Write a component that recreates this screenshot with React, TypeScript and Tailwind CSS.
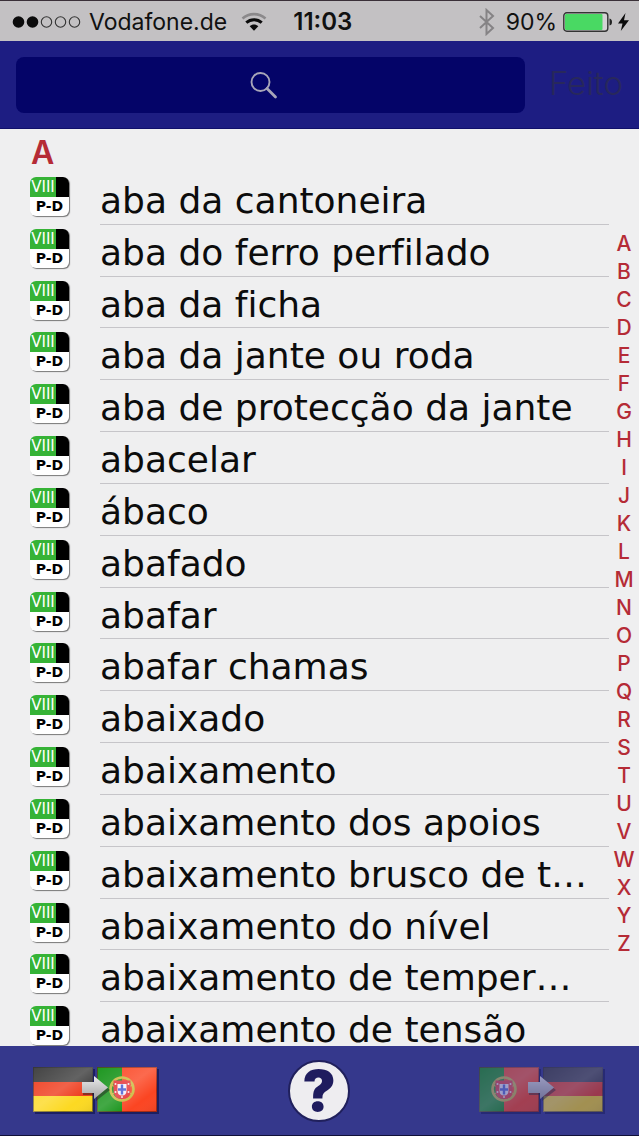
import { useId } from "react";

const entries = [
  "aba da cantoneira",
  "aba do ferro perfilado",
  "aba da ficha",
  "aba da jante ou roda",
  "aba de protecção da jante",
  "abacelar",
  "ábaco",
  "abafado",
  "abafar",
  "abafar chamas",
  "abaixado",
  "abaixamento",
  "abaixamento dos apoios",
  "abaixamento brusco de tensão",
  "abaixamento do nível",
  "abaixamento de temperatura",
  "abaixamento de tensão",
];

const letters = "ABCDEFGHIJKLMNOPQRSTUVWXYZ".split("");

function StatusBar() {
  return (
    <div className="flex h-[41px] shrink-0 items-center border-t border-[#3a3038] bg-[#c3c1c3] pt-[2px] pr-[9px] pl-[12px] text-[23px] leading-[30px] text-[#111]">
      <svg width="69" height="14" viewBox="0 0 69 14" aria-hidden="true">
        <circle cx="6.500" cy="7" r="5.800" fill="#0b0b0b" />
        <circle cx="20.500" cy="7" r="5.800" fill="#0b0b0b" />
        <g fill="none" stroke="#333" strokeWidth="1.100">
          <circle cx="34.500" cy="7" r="5.200" />
          <circle cx="48.500" cy="7" r="5.200" />
          <circle cx="62.500" cy="7" r="5.200" />
        </g>
      </svg>
      <span className="ml-[8px]">Vodafone.de</span>
      <svg className="ml-[14px]" width="26" height="20" viewBox="0 0 26 20" fill="none" aria-hidden="true">
        <path d="M1.500 6.500C8 .7 18 .7 24.500 6.500" stroke="#8b898b" strokeWidth="2.600" />
        <path d="M5.300 10.700c4.300-4 11.100-4 15.400 0" stroke="#0b0b0b" strokeWidth="3" />
        <path d="M8.700 14.200c2.500-2.300 6.100-2.300 8.600 0L13 18.800z" fill="#0b0b0b" />
      </svg>
      <span className="ml-[26px] text-[24px] font-semibold">11:03</span>
      <svg className="ml-auto" width="18" height="28" viewBox="0 0 18 28" fill="none" stroke="#858385" strokeWidth="2" aria-hidden="true">
        <path d="M2 8l13 12-6.500 6V2L15 8 2 20" />
      </svg>
      <span className="ml-[10px]">90%</span>
      <svg className="ml-[6px]" width="49" height="20" viewBox="0 0 49 20" aria-hidden="true">
        <rect x=".8" y=".8" width="44" height="18.400" rx="3" fill="#d4d2d4" stroke="#333" strokeWidth="1.400" />
        <rect x="2" y="2" width="37.500" height="16" rx="1" fill="#49d963" />
        <path d="M46.500 6.500q2.500.5 2.500 3.500t-2.500 3.500z" fill="#222" />
      </svg>
      <svg className="ml-[5px]" width="13" height="20" viewBox="0 0 13 20" aria-hidden="true">
        <path d="M8.500 1L1 11.500h4.500L3.800 19 12 8.200H7z" fill="#0b0b0b" />
      </svg>
    </div>
  );
}

function SearchBar() {
  return (
    <header className="flex h-[88px] shrink-0 items-center border-b border-[#10106a] bg-[#1d1d82] pr-[16px] pl-[16px]">
      <label className="relative flex h-[56px] flex-1">
        <input type="search" aria-label="Buscar" className="w-full rounded-lg bg-[#040468] px-4 text-2xl text-white outline-none" />
        <svg className="pointer-events-none absolute top-[14px] left-[233px]" width="29" height="29" viewBox="0 0 29 29" fill="none" stroke="#a8a6b8" aria-hidden="true">
          <circle cx="11.500" cy="11" r="9" strokeWidth="1.900" />
          <path d="M18 17.500l8.500 8.500" strokeWidth="2.800" strokeLinecap="round" />
        </svg>
      </label>
      <button type="button" className="ml-[24px] pb-[4px] text-[33px] leading-[40px] font-light text-[#28285c]">
        Feito
      </button>
    </header>
  );
}

function VolumeBadge() {
  return (
    <span className="mt-[4px] flex h-[39px] w-[39px] shrink-0 flex-col overflow-hidden rounded-md bg-white font-['DejaVu_Sans',sans-serif] shadow-[1px_1px_1px_#777]">
      <span className="flex h-[20px]">
        <span className="flex w-[26px] items-center justify-center bg-[#36b336] text-[15px] leading-[20px] text-white">VIII</span>
        <span className="flex-1 bg-black" />
      </span>
      <span className="text-center text-[14px] leading-[19px] font-bold text-black">P-D</span>
    </span>
  );
}

function GermanFlag({ x, y }: { x: number; y: number }) {
  return (
    <g transform={`translate(${x} ${y})`}>
      <rect x="2" y="2" width="60" height="45" fill="#10134a" opacity=".65" />
      <rect width="60" height="15" fill="#3c3c3c" />
      <rect y="15" width="60" height="14" fill="#ee3b1c" />
      <rect y="29" width="60" height="16" fill="#fcd922" />
      <rect x=".5" y=".5" width="59" height="44" fill="none" stroke="#222" strokeOpacity=".55" />
    </g>
  );
}

function PortugueseFlag({ x, y }: { x: number; y: number }) {
  return (
    <g transform={`translate(${x} ${y})`}>
      <rect x="2" y="2" width="60" height="45" fill="#10134a" opacity=".65" />
      <rect width="25" height="45" fill="#159318" />
      <rect x="25" width="35" height="45" fill="#fb4522" />
      <rect x=".5" y=".5" width="59" height="44" fill="none" stroke="#601408" strokeOpacity=".55" />
      <circle cx="25" cy="22" r="11.500" fill="none" stroke="#c9b83c" strokeWidth="2.600" />
      <path d="M14 18q11 6 22 0M14 27q11-4 22 0" fill="none" stroke="#c9b83c" strokeWidth="1.200" />
      <path d="M16.500 13.500h17V23q0 9-8.500 9t-8.500-9z" fill="#e33136" />
      <g fill="#f3e6ea">
        <circle cx="18.500" cy="17" r="1" />
        <circle cx="31.500" cy="17" r="1" />
        <circle cx="18.500" cy="25" r="1" />
        <circle cx="31.500" cy="25" r="1" />
        <circle cx="25" cy="30" r="1" />
      </g>
      <path d="M20.500 17h9v6.500q0 5-4.500 5t-4.500-5z" fill="#f3f1fa" />
      <path d="M25 17.500v10M21 22.500h8" stroke="#3f55d0" strokeWidth="2.400" />
    </g>
  );
}

function LanguagePair({ reversed = false }: { reversed?: boolean }) {
  const id = useId();
  return (
    <svg width="128" height="50" viewBox="0 0 128 50" aria-hidden="true">
      <defs>
        <linearGradient id={`${id}s`} x1="0" y1="0" x2="1" y2="1">
          <stop offset="0" stopColor="#fff" stopOpacity=".04" />
          <stop offset=".48" stopColor="#fff" stopOpacity=".2" />
          <stop offset=".75" stopColor="#fff" stopOpacity="0" />
          <stop offset="1" stopColor="#000" stopOpacity=".08" />
        </linearGradient>
        <linearGradient id={`${id}a`} x1="0" y1="0" x2="0" y2="1">
          <stop offset="0" stopColor="#ececec" />
          <stop offset="1" stopColor="#a4a4a4" />
        </linearGradient>
      </defs>
      {reversed ? <PortugueseFlag x={1} y={1} /> : <GermanFlag x={1} y={1} />}
      {reversed ? <GermanFlag x={65} y={1} /> : <PortugueseFlag x={65} y={1} />}
      <rect x="1" y="1" width="60" height="45" fill={`url(#${id}s)`} />
      <rect x="65" y="1" width="60" height="45" fill={`url(#${id}s)`} />
      <path d="M51 19h13v-6l14 11-14 11v-6H51z" fill="#222" opacity=".5" />
      <path d="M50 16h12v-6l14 11.500L62 33v-6H50z" fill={`url(#${id}a)`} />
    </svg>
  );
}

export default function App() {
  return (
    <div className="flex min-h-screen flex-col bg-[#efeff0] font-['Inter','Liberation_Sans',sans-serif]">
      <StatusBar />
      <SearchBar />
      <main className="flex flex-1">
        <section className="flex min-w-0 flex-1 flex-col">
          <h2 className="h-[44px] pt-[4px] pl-[31px] text-[32px] leading-[40px] font-semibold text-[#b52b36]">A</h2>
          <ul className="-mb-2 grid flex-1 auto-rows-fr grid-cols-1">
            {entries.map((entry) => (
              <li key={entry} className="flex min-w-0 pl-[30px]">
                <VolumeBadge />
                <a
                  href="#entry"
                  className="ml-[31px] min-w-0 flex-1 truncate border-b border-[#c6c5c9] pt-[6px] pr-[19px] font-['DejaVu_Sans',sans-serif] text-[36px] leading-[44px] text-[#0c0c0c] [font-variant-ligatures:none]"
                >
                  {entry}
                </a>
              </li>
            ))}
          </ul>
        </section>
        <nav aria-label="Índice" className="flex w-[30px] shrink-0 flex-col justify-center pt-[12px]">
          {letters.map((letter) => (
            <a key={letter} href={`#${letter}`} className="text-center text-[21px] leading-[28px] font-medium text-[#b52b36]">
              {letter}
            </a>
          ))}
        </nav>
      </main>
      <footer className="relative flex h-[90px] shrink-0 items-center justify-between border-b border-[#101038] bg-[#35388c] pr-[33px] pl-[32px]">
        <button type="button" aria-label="Deutsch – Português">
          <LanguagePair />
        </button>
        <button
          type="button"
          aria-label="Ajuda"
          className="flex h-[62px] w-[62px] items-center justify-center rounded-full border-2 border-[#20205c] bg-[#eeedf0] text-[56px] leading-[58px] font-black text-[#1f1c5e]"
        >
          ?
        </button>
        <button type="button" disabled aria-label="Português – Deutsch" className="opacity-55">
          <LanguagePair reversed />
        </button>
      </footer>
    </div>
  );
}
